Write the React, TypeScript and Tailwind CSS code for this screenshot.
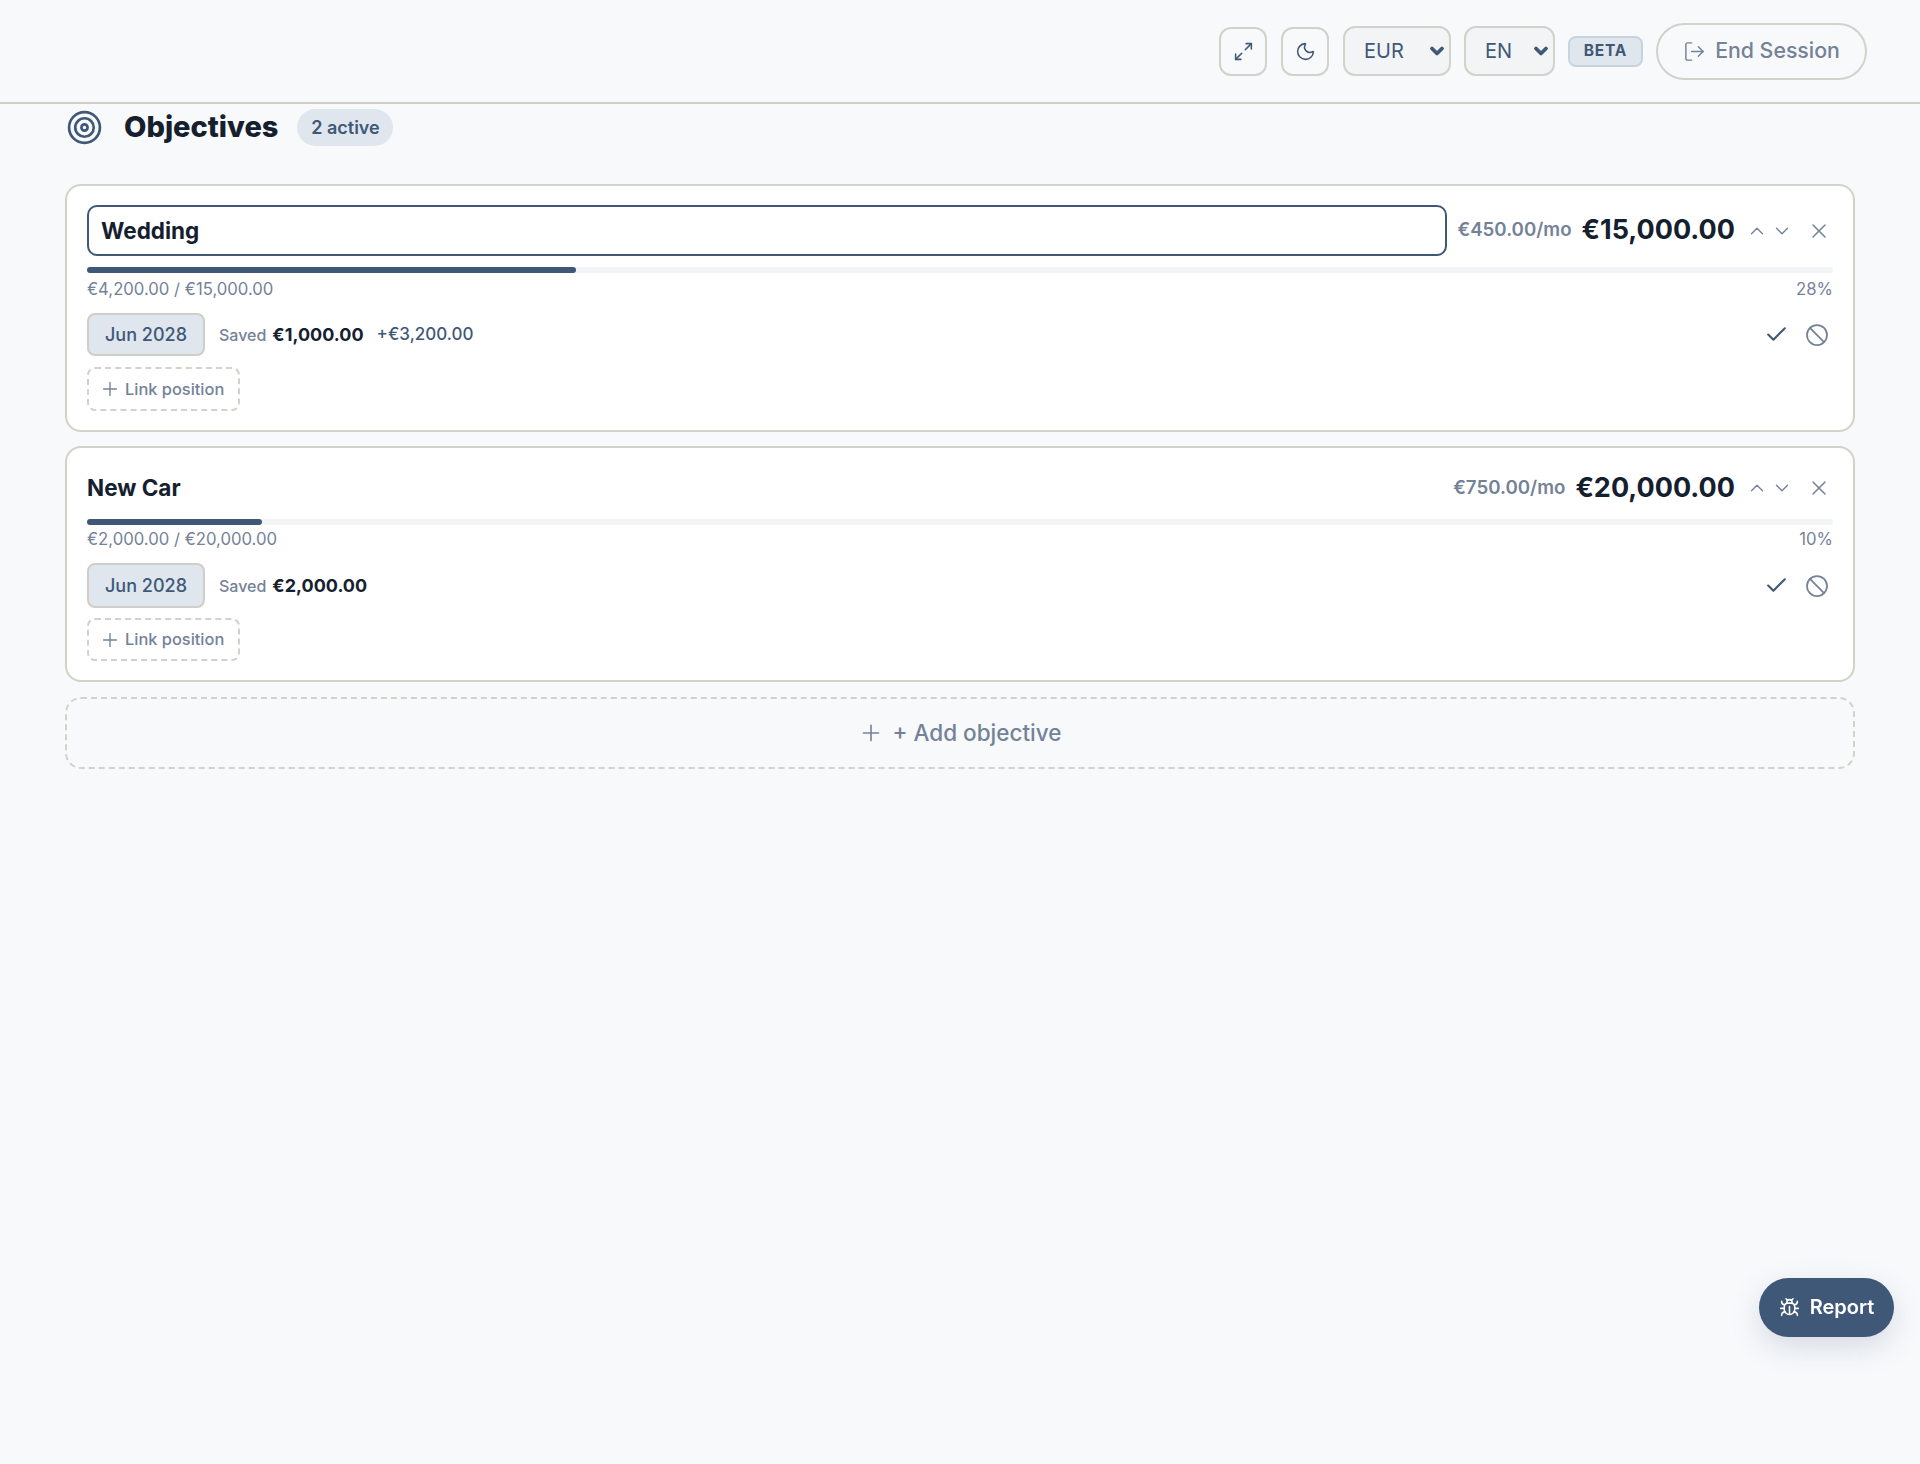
import { Ban, Bug, Check, ChevronDown, ChevronUp, LogOut, Maximize2, Moon, Plus, Target, X } from 'lucide-react';

type Objective = {
  name: string;
  monthly: string;
  target: string;
  progress: string;
  percent: number;
  saved: string;
  extra?: string;
  editing?: boolean;
};

const objectives: Objective[] = [
  { name: 'Wedding', monthly: '€450.00/mo', target: '€15,000.00', progress: '€4,200.00 / €15,000.00', percent: 28, saved: '€1,000.00', extra: '+€3,200.00', editing: true },
  { name: 'New Car', monthly: '€750.00/mo', target: '€20,000.00', progress: '€2,000.00 / €20,000.00', percent: 10, saved: '€2,000.00' },
];

function HeaderSelect({ label, className }: { label: string; className: string }) {
  return (
    <div className={`relative h-[50px] ${className}`}>
      <select className="h-full w-full appearance-none rounded-xl border-2 border-[#d2d1ca] bg-[#f3f4f6] pl-[19px] text-[20px] text-[#3f5878]">
        <option>{label}</option>
      </select>
      <ChevronDown className="pointer-events-none absolute top-[15px] right-[4px] h-[20px] w-[20px] text-[#3f5878]" strokeWidth={4.5} />
    </div>
  );
}

function ObjectiveCard({ objective }: { objective: Objective }) {
  return (
    <div className="rounded-2xl border-2 border-[#d2d1ca] bg-white px-[20px] pt-[19px] pb-[19px]">
      <div className={`flex items-center ${objective.editing ? 'h-[51px]' : 'h-[42px]'}`}>
        {objective.editing ? (
          <input
            readOnly
            value={objective.name}
            className="h-[51px] flex-1 rounded-[10px] border-2 border-[#3f5878] px-[12px] text-[22.5px] font-bold text-[#15202f] outline-none"
          />
        ) : (
          <span className="flex-1 text-[22.5px] font-bold text-[#15202f]">{objective.name}</span>
        )}
        <span className="ml-[10px] text-[18.7px] font-semibold text-[#748298]">{objective.monthly}</span>
        <span className="ml-[10px] text-[27px] font-bold text-[#15202f]">{objective.target}</span>
        <div className="ml-[11px] flex items-center gap-[3px] text-[#748298]">
          <ChevronUp className="h-[22px] w-[22px]" strokeWidth={1.5} />
          <ChevronDown className="h-[22px] w-[22px]" strokeWidth={1.5} />
        </div>
        <X className="ml-[14px] mr-[2px] h-[24px] w-[24px] text-[#748298]" strokeWidth={1.5} />
      </div>

      <div className={`${objective.editing ? 'mt-[11px]' : 'mt-[10px]'} h-[6px] rounded-full bg-[#f3f4f6]`}>
        <div className="h-full rounded-full bg-[#3f5878]" style={{ width: `${objective.percent}%` }} />
      </div>

      <div className={`${objective.editing ? 'mt-[5px]' : 'mt-[3px]'} flex h-[22px] items-center justify-between pt-[1px] text-[16.7px] text-[#748298]`}>
        <span>{objective.progress}</span>
        <span>{objective.percent}%</span>
      </div>

      <div className={`mt-[13px] flex items-center ${objective.editing ? 'h-[43px]' : 'h-[45px]'}`}>
        <span className="flex h-full w-[118px] items-center justify-center rounded-lg border-2 border-[#cfcec7] bg-[#dfe6ee] text-[18px] font-medium text-[#3f5878]">
          Jun 2028
        </span>
        <span className="ml-[14px] text-[16px] font-medium text-[#748298]">Saved</span>
        <span className="ml-[6px] text-[18px] font-bold text-[#15202f]">{objective.saved}</span>
        {objective.extra && <span className="ml-[13px] text-[17px] font-medium text-[#3f5878]">{objective.extra}</span>}
        <div className="ml-auto flex items-center gap-[16px] pr-[4px]">
          <Check className="h-[25px] w-[25px] text-[#3f5878]" strokeWidth={2} />
          <Ban className="h-[24px] w-[24px] text-[#748298]" strokeWidth={1.75} />
        </div>
      </div>

      <button className={`${objective.editing ? 'mt-[11px] h-[44px]' : 'mt-[10px] h-[43px]'} flex w-[153px] items-center gap-[4px] rounded-lg border-2 border-dashed border-[#d2d1ca] pl-[10px] text-[16.4px] font-medium text-[#748298]`}>
        <Plus className="h-[22px] w-[22px]" strokeWidth={1.5} />
        Link position
      </button>
    </div>
  );
}

export default function App() {
  return (
    <div className="min-h-[1464px] bg-[#f8f9fb] font-['Inter',sans-serif]">
      <header className="flex h-[104px] items-center justify-end gap-[13px] border-b-2 border-[#cfcec7] pr-[53px]">
        <button className="mr-[1px] flex h-[49px] w-[48px] items-center justify-center rounded-xl border-2 border-[#d2d1ca] text-[#3f5878]">
          <Maximize2 className="h-[21px] w-[21px]" strokeWidth={1.75} />
        </button>
        <button className="mr-[1px] flex h-[49px] w-[48px] items-center justify-center rounded-xl border-2 border-[#d2d1ca] text-[#3f5878]">
          <Moon className="h-[21px] w-[21px]" strokeWidth={1.75} />
        </button>
        <HeaderSelect label="EUR" className="w-[108px]" />
        <HeaderSelect label="EN" className="w-[91px]" />
        <span className="flex h-[31px] w-[75px] items-center justify-center rounded-lg border-2 border-[#c8d3e0] bg-[#dfe6ee] text-[15.5px] font-bold tracking-wider text-[#3f5878]">
          BETA
        </span>
        <button className="flex h-[57px] w-[211px] items-center justify-center gap-[9px] rounded-full border-2 border-[#d2d1ca] text-[21.3px] font-medium text-[#748298]">
          <LogOut className="h-[23px] w-[23px]" strokeWidth={1.5} />
          End Session
        </button>
      </header>

      <main className="px-[65px]">
        <div className="mt-[5px] flex h-[37px] items-center">
          <Target className="ml-[1px] h-[37px] w-[37px] text-[#3f5878]" strokeWidth={1.75} />
          <h1 className="ml-[21px] pb-[2px] text-[29px] font-extrabold text-[#15202f]">Objectives</h1>
          <span className="ml-[19px] flex h-[37px] w-[96px] items-center justify-center rounded-full bg-[#dfe6ee] text-[18px] font-semibold text-[#3f5878]">
            2 active
          </span>
        </div>

        <div className="mt-[38px] flex flex-col gap-[14px]">
          {objectives.map((objective) => (
            <ObjectiveCard key={objective.name} objective={objective} />
          ))}
          <button className="mt-[1px] flex h-[72px] items-center justify-center gap-[8px] rounded-2xl border-2 border-dashed border-[#d2d1ca] text-[22.5px] font-medium text-[#748298]">
            <Plus className="h-[26px] w-[26px]" strokeWidth={1.5} />
            + Add objective
          </button>
        </div>
      </main>

      <button className="fixed right-[26px] bottom-[127px] flex h-[59px] w-[135px] items-center justify-center gap-[10px] rounded-full bg-[#3f5878] text-[20px] font-semibold text-white shadow-[0_10px_30px_rgba(63,88,120,0.18)]">
        <Bug className="h-[21px] w-[21px]" strokeWidth={1.75} />
        <span className="pb-[2px]">Report</span>
      </button>
    </div>
  );
}
